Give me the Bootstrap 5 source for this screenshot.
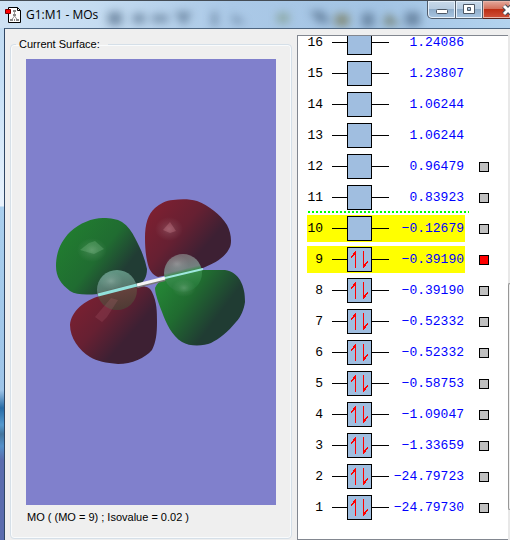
<!DOCTYPE html>
<html lang="en">
<head>
<meta charset="utf-8">
<meta name="viewport" content="width=device-width, initial-scale=1">
<title>G1:M1 - MOs</title>
<link href="https://cdn.jsdelivr.net/npm/bootstrap@5.3.0/dist/css/bootstrap.min.css" rel="stylesheet">
<style>
body{font-family:"Liberation Sans",Arial,sans-serif;font-size:11px;line-height:16px;color:#000;
  background:linear-gradient(to bottom,#c1daf0 0,#c5dff6 80px,#e9f3fd 206px,#a9cfee 207px,#9ec4e8 390px,#276ba6 408px,#5599ce 425px,#44759d 434px,#5590c9 446px,#5a6cae 460px,#5a6cae 100%)}
.titlebar{height:28px;padding-left:5px;border-top:1px solid #444c55;
  background:linear-gradient(to right,#cfe2f4 0,#c5dcf1 18%,#abc9e7 45%,#a3c4e4 75%,#b3d3ef 100%)}
.blurs{left:90px;top:5px;right:0;width:auto;filter:blur(4px)}
.title-text{font-family:"Open Sans","Noto Sans",sans-serif;font-size:12px;line-height:16px;margin-left:4px}
.winbtn{height:18px;border:1px solid #505c6b;border-top:0;box-shadow:inset 0 0 0 1px #e6f0fa;padding:0;background:linear-gradient(#c8d9ea 0,#b7cce1 45%,#90adca 50%,#a9c6e2 100%)}
.winbtn + .winbtn{border-left:0}
.btn-min{width:29px;border-radius:0 0 0 5px}
.btn-max{width:27px}
.btn-x{width:27px;background:linear-gradient(#e3a99c 0,#d4705b 45%,#bd2e14 50%,#d0513a 100%);border-color:#5a2018;box-shadow:inset 0 0 0 1px #eab5a9}
.client{margin-left:4px;border-left:1px solid #2f4664;border-top:1px solid #4d6580;background:#efefef}
.surface{margin:7px 5px 0 5px;padding:0}
.surface fieldset{border:1px solid #d5dfe8;border-radius:4px;box-shadow:inset 0 0 0 1px #f9fbfc;padding:0 15px 13px;margin-bottom:1px}
.surface legend{float:none;width:auto;font-size:11px;line-height:16px;margin:0 0 7px -10px;padding:0 8px 0 3px}
.viewport3d{background:#8080cc}
.caption3d{padding:4px 0 0 1px}
.orbitals{width:211px;margin-top:6px;border:1px solid #828790;border-right:0;background:#fff;overflow:hidden}
.rows{margin-top:-9px;padding-bottom:15px}
.mo{height:31px;padding:2px 0 2px 9px;font-family:"Liberation Mono","Courier New",monospace;font-size:13px;line-height:27px}
.level{width:158px;height:27px}
.picked .level{background:#ff0}
.num{width:16px;text-align:right}
.wire{height:1px;background:#000}
.wire-l{width:15px;margin-left:9px}
.wire-r{width:17px}
.cell{width:25px;height:25px;border:1px solid #000;background:#a0bee0}
.cell svg{display:block}
.energy{width:76px;text-align:right;color:#00f;white-space:nowrap;margin-left:-1px}
.gap-line{height:2px;width:161px;margin:-2px 0 0 10px;background:repeating-linear-gradient(to right,#0f0 0 2px,#fff 2px 4px)}
.pick{appearance:none;width:10px;height:10px;margin:0 0 0 14px;border:1px solid #000;background:#c0c0c0}
.pick:checked{background:#f00}
.scroll-edge{width:2px;margin-top:6px;background:#e8e8e8}
.scroll-thumb{border:1px solid #979797;border-right:0;border-radius:2px 0 0 2px;height:45%;background:#eee;margin-bottom:30px}
</style>
<script src="https://cdn.jsdelivr.net/npm/bootstrap@5.3.0/dist/js/bootstrap.bundle.min.js"></script>
</head>
<body class="d-flex flex-column min-vh-100 overflow-hidden">
<header class="titlebar d-flex justify-content-between position-relative overflow-hidden">
  <svg class="blurs position-absolute" height="22" viewBox="0 0 420 22" preserveAspectRatio="xMinYMin" aria-hidden="true">
    <g fill="#47617c" opacity=".62"><rect x="18" y="6" width="14" height="13"/><rect x="43" y="8" width="12" height="9"/><rect x="62" y="9" width="16" height="7"/><path d="M84 6h18l-8 14zM122 6h5v14h-5zM142 8l14 9h-12z"/><path d="M219 5h14l8 12h-12z"/><rect x="245" y="8" width="14" height="12" fill="#6e6b3e"/><rect x="272" y="7" width="12" height="14"/><path d="M298 7l12 12h-17z" fill="#5b5c38"/><rect x="315" y="6" width="15" height="14"/><rect x="187" y="7" width="12" height="10" fill="#7b967d"/></g>
  </svg>
  <div class="d-flex align-items-center position-relative">
    <svg width="17" height="18" viewBox="0 0 17 18" aria-hidden="true"><path d="M3.500 1.500h9l3 3v12h-12z" fill="#fff" stroke="#000"/><path d="M12.500 1.500v3h3" fill="none" stroke="#000"/><path d="M9.500 5v5l-3 4M9.500 10l3 4" stroke="#999" fill="none"/><path d="M8 4h3v2H8zM8 8h3v2H8zM5 13h3v2H5zM11 13h3v2h-3zM9 13h1v2H9z" fill="#888"/><path d="M.5 3.500h5v4h-5z" fill="#f00" stroke="#700"/></svg>
    <span class="title-text">G1:M1 - MOs</span>
  </div>
  <div class="d-flex align-items-start position-relative flex-shrink-0">
    <button class="winbtn btn-min d-flex align-items-center justify-content-center" type="button" aria-label="Minimize"><svg width="14" height="14" viewBox="0 0 14 14"><rect x="1.500" y="6.500" width="11" height="4" rx="1" fill="#fff" stroke="#4c5765"/></svg></button>
    <button class="winbtn btn-max d-flex align-items-center justify-content-center" type="button" aria-label="Maximize"><svg width="14" height="14" viewBox="0 0 14 14"><path d="M1.500 1.500h11v9h-11zM5.500 4.500v3h3v-3z" fill="#fff" fill-rule="evenodd" stroke="#4c5765"/></svg></button>
    <button class="winbtn btn-x d-flex align-items-center justify-content-end overflow-hidden border-end-0" type="button" aria-label="Close"><svg class="flex-shrink-0" width="9" height="14" viewBox="0 0 9 14"><path d="M3 3l8 8M11 3l-8 8" stroke="#434b58" stroke-width="5"/><path d="M3 3l8 8M11 3l-8 8" stroke="#fff" stroke-width="3"/></svg></button>
  </div>
</header>
<main class="client d-flex flex-grow-1">
  <section class="surface d-flex flex-column flex-grow-1">
    <fieldset class="d-flex flex-column flex-grow-1">
      <legend>Current Surface:</legend>
      <div class="viewport3d flex-grow-1 d-flex">
        <svg class="w-100" viewBox="26 59 250 446" role="img" aria-label="Molecular orbital surface">
          <defs>
            <linearGradient id="g1" x1=".15" y1=".2" x2=".95" y2=".72"><stop offset="0" stop-color="#217b30"/><stop offset=".45" stop-color="#206c31"/><stop offset=".8" stop-color="#213c34"/></linearGradient>
            <linearGradient id="g2" x1=".1" y1=".15" x2=".85" y2=".62"><stop offset="0" stop-color="#248435"/><stop offset=".4" stop-color="#206b30"/><stop offset=".85" stop-color="#203c33"/></linearGradient>
            <linearGradient id="r1" x1=".1" y1=".15" x2=".8" y2=".7"><stop offset="0" stop-color="#7b2031"/><stop offset=".45" stop-color="#662032"/><stop offset=".85" stop-color="#3d2033"/></linearGradient>
            <radialGradient id="glow"><stop offset="0" stop-color="#fff" stop-opacity=".2"/><stop offset=".45" stop-color="#fff" stop-opacity=".08"/><stop offset="1" stop-color="#fff" stop-opacity="0"/></radialGradient>
            <linearGradient id="s1" x1=".2" y1="0" x2=".45" y2="1"><stop offset="0" stop-color="#639a87"/><stop offset=".48" stop-color="#587b70"/><stop offset=".56" stop-color="#65423d"/><stop offset="1" stop-color="#503b35"/></linearGradient>
            <linearGradient id="s2" x1=".3" y1="0" x2=".55" y2="1"><stop offset="0" stop-color="#78666e"/><stop offset=".42" stop-color="#738080"/><stop offset=".52" stop-color="#398d4c"/><stop offset="1" stop-color="#237536"/></linearGradient>
          </defs>
          <path d="M103 218C111 218 117 219 122 222C128 226 132 232 135 238C141 249 145 259 147 269C147 277 144 283 137 285L98 294C86 295 76 295 70 291C61 284 56 277 56 266C56 251 62 240 70 232C80 223 92 218 103 218Z" fill="url(#g1)"/>
          <path d="M100 296C112 291 124 290 137 287C144 285 150 287 152 292C157 302 157 312 157 322C157 334 156 342 152 350C145 358 132 364 118 364C106 363 97 361 90 357C79 350 70 338 70 325C71 311 85 300 100 296Z" fill="url(#r1)"/>
          <path d="M173 200C181 199 190 199 197 201C208 205 221 215 227 225C231 232 232 242 230 247C225 258 215 263 203 268L158 277C153 275 151 272 149 268C146 259 145 249 145 238C145 224 148 214 155 208C160 204 166 200 173 200Z" fill="url(#r1)"/>
          <path d="M202 270L225 270C232 271 237 275 240 280C244 287 245 294 245 302C244 309 241 317 236 322C228 332 219 339 211 343C204 346 190 347 182 342C172 336 166 323 162 312C159 304 155 294 155 288C159 279 169 274 183 273Z" fill="url(#g2)"/>
          <ellipse cx="92" cy="250" rx="15" ry="12" fill="url(#glow)"/>
          <path d="M80 250L89 243 95 241 104 249 94 254Z" fill="#a7e0b0" opacity=".2"/>
          <ellipse cx="169" cy="229" rx="14" ry="12" fill="url(#glow)"/>
          <path d="M163 230L170 222 176 231 170 233Z" fill="#f4a6b1" opacity=".22"/>
          <circle cx="117" cy="290" r="20" fill="url(#s1)"/>
          <circle cx="183" cy="273" r="19" fill="url(#s2)"/>
          <ellipse cx="111" cy="281" rx="12" ry="9" fill="url(#glow)"/>
          <ellipse cx="177" cy="264" rx="12" ry="9" fill="url(#glow)"/>
          <path d="M111 298L118 300 107 317 102 322 95 317Z" fill="#d47a8c" opacity=".16"/>
          <ellipse cx="184" cy="288" rx="12" ry="9" fill="url(#glow)"/>
          <path d="M98 295L137 285" stroke="#92e1dc" stroke-width="3"/>
          <path d="M165 278L203 269" stroke="#a0e8df" stroke-width="2"/>
          <path d="M137 286L165 279" stroke="#777" stroke-width="4"/>
          <path d="M137 285L165 278" stroke="#f4f4f4" stroke-width="3"/>
        </svg>
      </div>
      <div class="caption3d">MO ( (MO = 9) ; Isovalue = 0.02 )</div>
    </fieldset>
  </section>
  <section class="orbitals flex-shrink-0" aria-label="Orbital energies"><div class="rows" id="rows"></div></section>
  <div class="scroll-edge flex-shrink-0 d-flex flex-column justify-content-end"><div class="scroll-thumb"></div></div>
</main>
<script>
const energies = ["−24.79730","−24.79723","−1.33659","−1.09047","−0.58753","−0.52332","−0.52332","−0.39190","−0.39190","−0.12679","0.83923","0.96479","1.06244","1.06244","1.23807","1.24086"];
const electrons = '<svg width="23" height="23" viewBox="1 1 23 23" aria-hidden="true" shape-rendering="crispEdges"><path d="M8 4h1v17H8zM16 4h1v17h-1z" fill="#f00"/><path d="M7 5h1v3H7zM6 6h1v3H6zM5 8h1v2H5zM4 9h1v2H4zM17 17h1v3h-1zM18 16h1v3h-1zM19 15h1v2h-1zM20 14h1v2h-1z" fill="#f00"/></svg>';
let out = "";
for (let n = 16; n >= 1; n--) {
  const picked = n === 9 || n === 10;
  out += `<div class="mo d-flex align-items-center${picked ? " picked" : ""}">
    <div class="level d-flex align-items-center"><span class="num">${n}</span><span class="wire wire-l"></span><span class="cell">${n <= 9 ? electrons : ""}</span><span class="wire wire-r"></span><span class="energy">${energies[n - 1]}</span></div>
    ${n <= 12 ? `<input class="pick" type="checkbox" aria-label="Surface for orbital ${n}"${n === 9 ? " checked" : ""}>` : ""}</div>`;
  if (n === 11) out += '<div class="gap-line"></div>';
}
document.getElementById("rows").innerHTML = out;
</script>
</body>
</html>
